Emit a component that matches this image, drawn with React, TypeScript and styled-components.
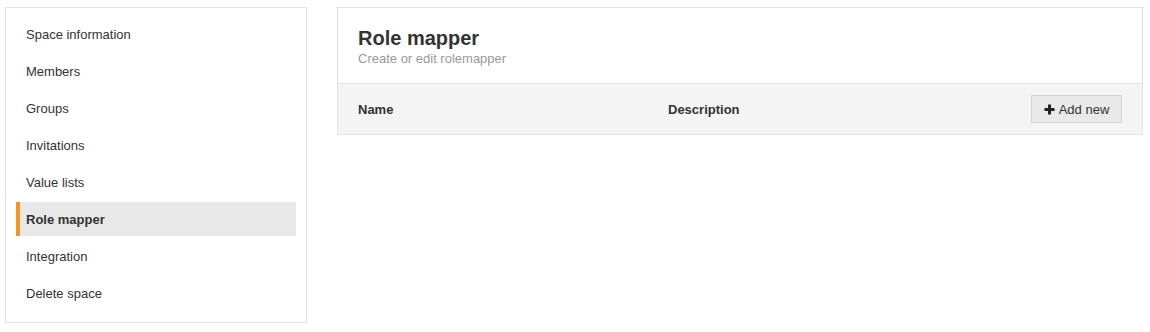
import React from "react";
import styled, { createGlobalStyle } from "styled-components";

const Global = createGlobalStyle`
  html, body { margin: 0; padding: 0; background: #fff; }
  body { font-family: "Liberation Sans", Arial, Helvetica, sans-serif; color: #333; font-size: 13px; }
`;

const Page = styled.div`
  display: flex;
  align-items: flex-start;
  gap: 30px;
  padding: 7px 0 0 5px;
`;

const Sidebar = styled.nav`
  box-sizing: border-box;
  width: 302px;
  border: 1px solid #e3e3e3;
  padding: 9px 10px 12px 10px;
  display: flex;
  flex-direction: column;
  gap: 3px;
`;

const NavItem = styled.a<{ $active?: boolean }>`
  display: flex;
  align-items: center;
  height: 34px;
  padding-left: ${(p) => (p.$active ? "6px" : "10px")};
  padding-top: ${(p) => (p.$active ? "1px" : "0")};
  border-left: ${(p) => (p.$active ? "4px solid #f7931e" : "none")};
  background: ${(p) => (p.$active ? "#e8e8e8" : "transparent")};
  font-weight: ${(p) => (p.$active ? 700 : 400)};
  color: #333;
  font-size: 13px;
  text-decoration: none;
  cursor: pointer;
  box-sizing: border-box;
`;

const Panel = styled.section`
  box-sizing: border-box;
  width: 806px;
  border: 1px solid #e3e3e3;
`;

const PanelHeader = styled.header`
  padding: 18px 20px 16px 20px;
  border-bottom: 1px solid #e3e3e3;
`;

const Title = styled.h1`
  margin: 0;
  font-size: 20px;
  line-height: 24px;
  font-weight: 700;
  color: #333;
`;

const Subtitle = styled.p`
  margin: 0;
  font-size: 13px;
  line-height: 17px;
  color: #999;
`;

const HeadRow = styled.div`
  display: flex;
  align-items: center;
  height: 50px;
  background: #f4f4f4;
  padding: 0 20px;
`;

const HeadCell = styled.div<{ $width?: number }>`
  font-weight: 700;
  font-size: 13px;
  color: #333;
  width: ${(p) => (p.$width ? `${p.$width}px` : "auto")};
  flex: ${(p) => (p.$width ? "none" : "1")};
`;

const AddButton = styled.button`
  display: inline-flex;
  align-items: center;
  gap: 4px;
  height: 28px;
  width: 91px;
  justify-content: center;
  box-sizing: border-box;
  background: #e9e9e9;
  border: 1px solid #d2d2d2;
  border-radius: 1px;
  font-family: inherit;
  font-size: 13px;
  color: #333;
  cursor: pointer;
  padding: 0 8px;
`;

const Plus = () => (
  <svg width="11" height="11" viewBox="0 0 11 11" aria-hidden>
    <rect x="4" y="0.5" width="3" height="10" fill="#222" />
    <rect x="0.5" y="4" width="10" height="3" fill="#222" />
  </svg>
);

const items = [
  "Space information",
  "Members",
  "Groups",
  "Invitations",
  "Value lists",
  "Role mapper",
  "Integration",
  "Delete space",
];

export default function App() {
  return (
    <>
      <Global />
      <Page>
        <Sidebar>
          {items.map((it) => (
            <NavItem key={it} $active={it === "Role mapper"}>
              {it}
            </NavItem>
          ))}
        </Sidebar>
        <Panel>
          <PanelHeader>
            <Title>Role mapper</Title>
            <Subtitle>Create or edit rolemapper</Subtitle>
          </PanelHeader>
          <HeadRow>
            <HeadCell $width={310}>Name</HeadCell>
            <HeadCell>Description</HeadCell>
            <AddButton>
              <Plus />
              Add new
            </AddButton>
          </HeadRow>
        </Panel>
      </Page>
    </>
  );
}
